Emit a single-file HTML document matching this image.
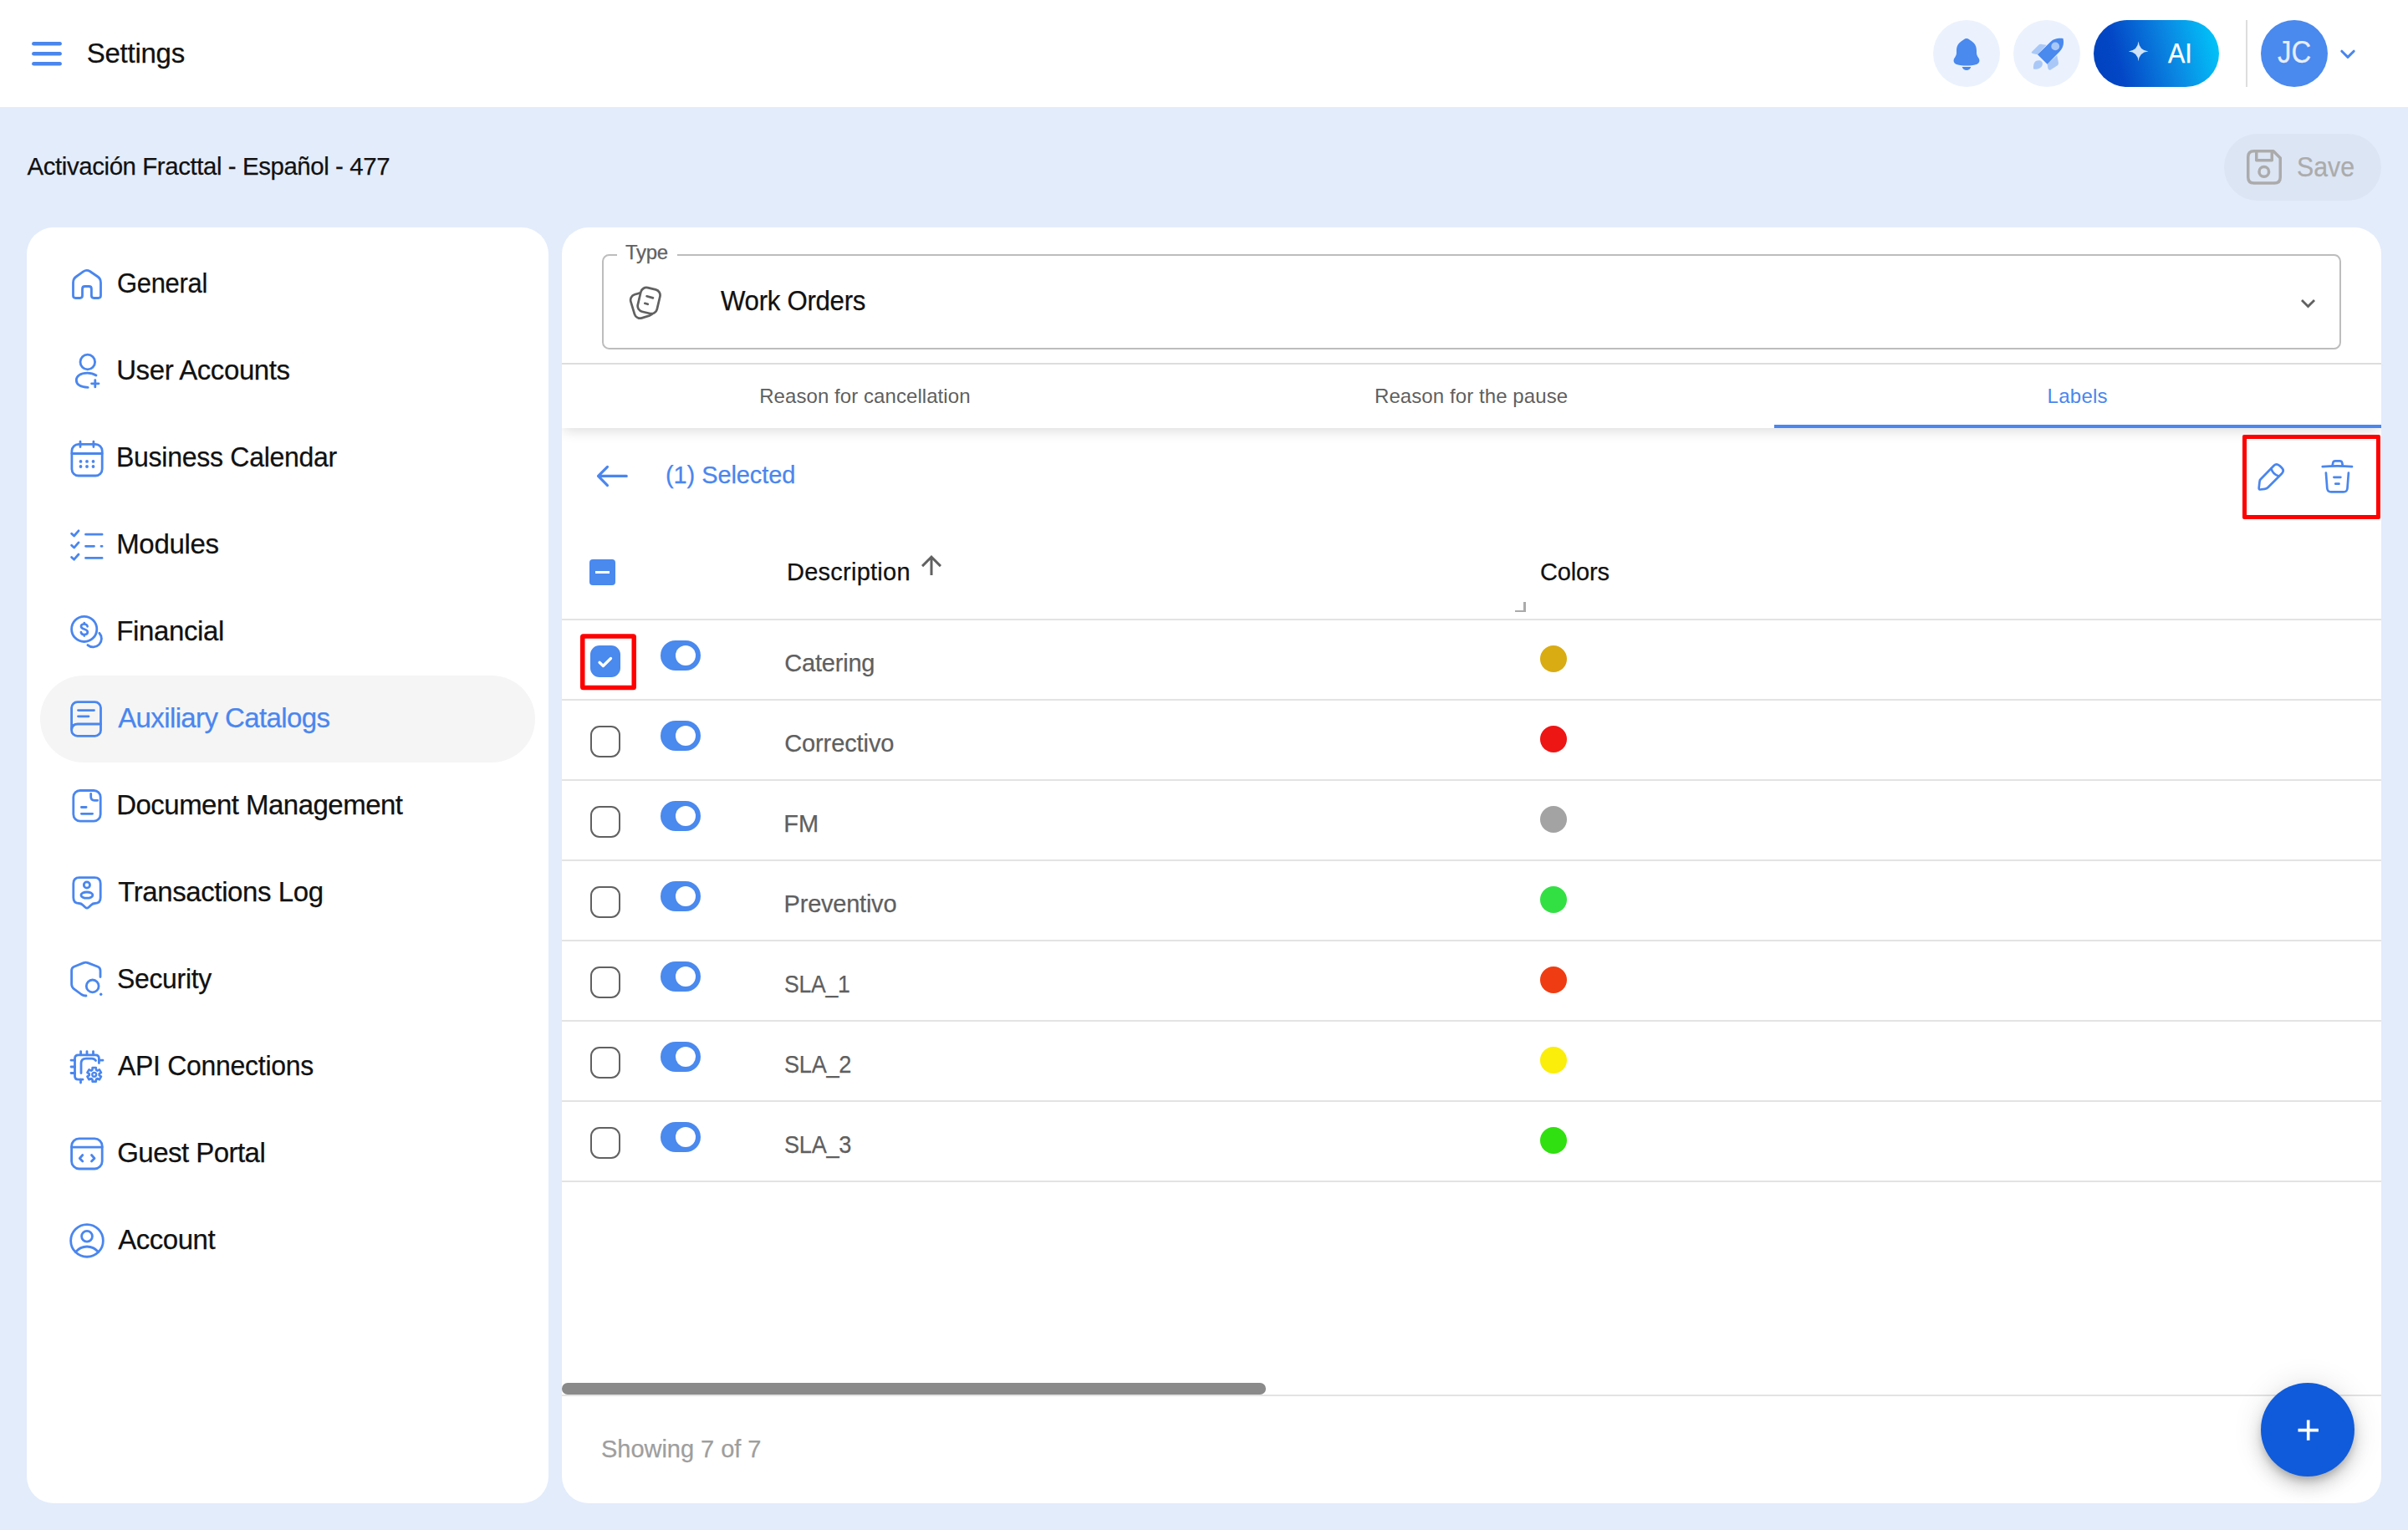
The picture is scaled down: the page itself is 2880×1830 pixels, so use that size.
<!DOCTYPE html>
<html><head><meta charset="utf-8">
<style>
*{box-sizing:border-box;margin:0;padding:0}
html,body{width:2880px;height:1830px;overflow:hidden}
body{background:#E3ECFB;font-family:"Liberation Sans",sans-serif;color:#111;position:relative}
.a{position:absolute}
.t{position:absolute;white-space:nowrap;line-height:1}
svg.a{overflow:visible}
.card{background:#fff;border-radius:32px}
.item{position:absolute;left:48px;width:592px;height:104px;border-radius:52px}
.item.act{background:#F5F5F5}
.item svg{position:absolute;left:32px;top:28px;width:48px;height:48px;overflow:visible}
.item span{position:absolute;left:92px;top:35px;font-size:32px;line-height:1;white-space:nowrap;color:#111}
.item.act span{color:#4A86EE}
.ln{position:absolute;left:672px;width:2176px;height:2px;background:#E3E3E3}
.cb{position:absolute;left:706px;width:36px;height:38px;border:2.5px solid #616161;border-radius:11px}
.cb.on{background:#4A89EE;border-color:#4A89EE}
.tg{position:absolute;left:790px;width:48px;height:36px;border-radius:18px;background:#4A89EE}
.tg:after{content:"";position:absolute;left:17.5px;top:5.8px;width:24.6px;height:24.6px;border-radius:50%;background:#fff}
.rt{position:absolute;left:938.5px;letter-spacing:0.4px;font-size:28px;line-height:1;color:#5F5F5F;white-space:nowrap}
.dot{position:absolute;left:1842px;width:32px;height:32px;border-radius:50%}
</style></head><body>
<!-- header -->
<div class="a" style="left:0;top:0;width:2880px;height:128px;background:#fff"></div>
<svg class="a" style="left:0;top:0" width="100" height="100"><g stroke="#4A86EE" stroke-width="4.4" stroke-linecap="round"><line x1="40.3" y1="52.2" x2="71.7" y2="52.2"/><line x1="40.3" y1="64.2" x2="71.7" y2="64.2"/><line x1="40.3" y1="76.3" x2="71.7" y2="76.3"/></g></svg>
<div class="a" style="left:2312px;top:24px;width:80px;height:80px;border-radius:50%;background:#EBF2FD"></div>
<div class="a" style="left:2408px;top:24px;width:80px;height:80px;border-radius:50%;background:#EBF2FD"></div>
<div class="a" style="left:2504px;top:24px;width:150px;height:80px;border-radius:40px;background:linear-gradient(75deg,#0040BC 0%,#0347C6 22%,#0A86E2 60%,#00CCFC 100%)"></div>
<div class="a" style="left:2686px;top:24px;width:2px;height:80px;background:#DDDDDD"></div>
<div class="a" style="left:2704px;top:24px;width:80px;height:80px;border-radius:50%;background:#4A89EE"></div>
<svg class="a" style="left:0;top:0" width="1" height="1"><path d="M2800.8 61.2 L2808 68.4 L2815.2 61.2" fill="none" stroke="#4A86EE" stroke-width="3" stroke-linecap="round" stroke-linejoin="round"/></svg>

<div class="a" style="left:2660px;top:160px;width:188px;height:80px;border-radius:40px;background:#DCE5F4"></div>
<!-- sidebar -->
<div class="a card" style="left:32px;top:272px;width:624px;height:1526px"></div>
<div class="item" style="top:288px"></div>
<div class="item" style="top:392px"></div>
<div class="item" style="top:496px"></div>
<div class="item" style="top:600px"></div>
<div class="item" style="top:704px"></div>
<div class="item act" style="top:808px"></div>
<div class="item" style="top:912px"></div>
<div class="item" style="top:1016px"></div>
<div class="item" style="top:1120px"></div>
<div class="item" style="top:1224px"></div>
<div class="item" style="top:1328px"></div>
<div class="item" style="top:1432px"></div>

<!-- main card -->
<div class="a card" style="left:672px;top:272px;width:2176px;height:1526px"></div>
<div class="a" style="left:720px;top:304px;width:2080px;height:114px;border:2px solid #BDBDBD;border-radius:8.5px"></div>
<div class="a" style="left:738px;top:300px;width:72px;height:10px;background:#fff"></div>
<div class="a" style="left:672px;top:434px;width:2176px;height:2px;background:#DDDDDD"></div>
<div class="a" style="left:672px;top:436px;width:2176px;height:120px;overflow:hidden"><div class="a" style="left:0;top:0;width:2176px;height:76px;background:#fff;box-shadow:0 6px 14px -2px rgba(0,0,0,0.13)"></div></div>
<div class="a" style="left:2122px;top:508px;width:726px;height:4px;background:#4A86EE"></div>
<div class="a" style="left:2682px;top:520px;width:165px;height:101px;border:5px solid #F00;border-radius:2px"></div>

<div class="a" style="left:705px;top:669px;width:31px;height:31px;border-radius:4px;background:#4A89EE"></div>
<div class="a" style="left:712px;top:682.7px;width:17px;height:3.7px;background:#fff"></div>
<div class="a" style="left:1822px;top:720px;width:2.5px;height:12px;background:#AAAAAA"></div>
<div class="a" style="left:1812px;top:729.5px;width:12.5px;height:2.5px;background:#AAAAAA"></div>
<div class="ln" style="top:740px"></div>
<div class="cb on" style="top:771.5px"></div>
<div class="tg" style="top:766px"></div>
<div class="dot" style="top:772px;background:#D9AC14"></div>
<div class="ln" style="top:836px"></div>
<div class="cb" style="top:867.5px"></div>
<div class="tg" style="top:862px"></div>
<div class="dot" style="top:868px;background:#EE1515"></div>
<div class="ln" style="top:932px"></div>
<div class="cb" style="top:963.5px"></div>
<div class="tg" style="top:958px"></div>
<div class="dot" style="top:964px;background:#A3A3A3"></div>
<div class="ln" style="top:1028px"></div>
<div class="cb" style="top:1059.5px"></div>
<div class="tg" style="top:1054px"></div>
<div class="dot" style="top:1060px;background:#33E044"></div>
<div class="ln" style="top:1124px"></div>
<div class="cb" style="top:1155.5px"></div>
<div class="tg" style="top:1150px"></div>
<div class="dot" style="top:1156px;background:#F03C12"></div>
<div class="ln" style="top:1220px"></div>
<div class="cb" style="top:1251.5px"></div>
<div class="tg" style="top:1246px"></div>
<div class="dot" style="top:1252px;background:#FAEE0A"></div>
<div class="ln" style="top:1316px"></div>
<div class="cb" style="top:1347.5px"></div>
<div class="tg" style="top:1342px"></div>
<div class="dot" style="top:1348px;background:#30E010"></div>
<div class="ln" style="top:1412px"></div>
<div class="a" style="left:672px;top:1654px;width:842px;height:14px;border-radius:7px;background:#8A8A8A"></div>
<div class="ln" style="top:1668px"></div>
<div class="a" style="left:2704px;top:1654px;width:112px;height:112px;border-radius:50%;background:#0F5BDB;box-shadow:0 6px 10px -2px rgba(0,0,0,.2),0 12px 20px 0 rgba(0,0,0,.14),0 2px 36px 0 rgba(0,0,0,.12)"></div>
<div id="settings" class="t" style="left:103.80px;top:46.96px;font-size:33.00px;color:#111;letter-spacing:-0.271px;-webkit-text-stroke:0.25px #111">Settings</div>
<div id="ai" class="t" style="left:2592.60px;top:46.86px;font-size:33.00px;color:#fff;-webkit-text-stroke:0.25px #fff;letter-spacing:0.00px;transform-origin:0 0;transform:scaleX(0.9256)">AI</div>
<div id="jc" class="t" style="left:2724.00px;top:44.72px;font-size:36.00px;color:#E6EEFB;-webkit-text-stroke:0.25px #E6EEFB;letter-spacing:0.00px;transform-origin:0 0;transform:scaleX(0.9120)">JC</div>
<div id="act" class="t" style="left:32.60px;top:184.01px;font-size:29.40px;color:#111;letter-spacing:-0.403px;-webkit-text-stroke:0.25px #111">Activación Fracttal - Español - 477</div>
<div id="save" class="t" style="left:2747.00px;top:182.96px;font-size:33.00px;color:#ABABAB;-webkit-text-stroke:0.25px #ABABAB;letter-spacing:0.00px;transform-origin:0 0;transform:scaleX(0.9178)">Save</div>
<div id="s0" class="t" style="left:140.20px;top:322.46px;font-size:33.00px;color:#111;-webkit-text-stroke:0.25px #111;letter-spacing:-0.30px;transform-origin:0 0;transform:scaleX(0.9372)">General</div>
<div id="s1" class="t" style="left:139.20px;top:426.46px;font-size:33.00px;color:#111;letter-spacing:-0.408px;-webkit-text-stroke:0.25px #111">User Accounts</div>
<div id="s2" class="t" style="left:139.20px;top:530.46px;font-size:33.00px;color:#111;-webkit-text-stroke:0.25px #111;letter-spacing:-0.30px;transform-origin:0 0;transform:scaleX(0.9709)">Business Calendar</div>
<div id="s3" class="t" style="left:139.20px;top:634.46px;font-size:33.00px;color:#111;letter-spacing:-0.317px;-webkit-text-stroke:0.25px #111">Modules</div>
<div id="s4" class="t" style="left:139.20px;top:738.46px;font-size:33.00px;color:#111;letter-spacing:-0.363px;-webkit-text-stroke:0.25px #111">Financial</div>
<div id="s5" class="t" style="left:141.20px;top:842.46px;font-size:33.00px;color:#4A86EE;letter-spacing:-0.612px;-webkit-text-stroke:0.25px #4A86EE">Auxiliary Catalogs</div>
<div id="s6" class="t" style="left:139.20px;top:946.46px;font-size:33.00px;color:#111;letter-spacing:-0.522px;-webkit-text-stroke:0.25px #111">Document Management</div>
<div id="s7" class="t" style="left:141.20px;top:1050.46px;font-size:33.00px;color:#111;letter-spacing:-0.400px;-webkit-text-stroke:0.25px #111">Transactions Log</div>
<div id="s8" class="t" style="left:140.20px;top:1154.46px;font-size:33.00px;color:#111;-webkit-text-stroke:0.25px #111;letter-spacing:-0.30px;transform-origin:0 0;transform:scaleX(0.9667)">Security</div>
<div id="s9" class="t" style="left:141.20px;top:1258.46px;font-size:33.00px;color:#111;-webkit-text-stroke:0.25px #111;letter-spacing:-0.30px;transform-origin:0 0;transform:scaleX(0.9694)">API Connections</div>
<div id="s10" class="t" style="left:140.20px;top:1362.46px;font-size:33.00px;color:#111;letter-spacing:-0.536px;-webkit-text-stroke:0.25px #111">Guest Portal</div>
<div id="s11" class="t" style="left:141.20px;top:1466.46px;font-size:33.00px;color:#111;letter-spacing:-0.467px;-webkit-text-stroke:0.25px #111">Account</div>
<div id="type" class="t" style="left:748.40px;top:289.69px;font-size:24.70px;color:#616161;-webkit-text-stroke:0.25px #616161;letter-spacing:-0.30px;transform-origin:0 0;transform:scaleX(0.9700)">Type</div>
<div id="wo" class="t" style="left:862.00px;top:342.76px;font-size:33.00px;color:#111;-webkit-text-stroke:0.25px #111;letter-spacing:-0.30px;transform-origin:0 0;transform:scaleX(0.9451)">Work Orders</div>
<div id="tab1" class="t" style="left:908.20px;top:461.68px;font-size:24.00px;color:#5F5F5F;letter-spacing:0.068px">Reason for cancellation</div>
<div id="tab2" class="t" style="left:1644.00px;top:461.68px;font-size:24.00px;color:#5F5F5F;letter-spacing:0.084px">Reason for the pause</div>
<div id="tab3" class="t" style="left:2448.60px;top:461.68px;font-size:24.00px;color:#4A86EE;letter-spacing:0.260px">Labels</div>
<div id="sel" class="t" style="left:796.00px;top:554.15px;font-size:29.00px;color:#4A86EE;letter-spacing:-0.091px;-webkit-text-stroke:0.25px #4A86EE">(1) Selected</div>
<div id="desc" class="t" style="left:941.00px;top:669.75px;font-size:29.00px;color:#111;letter-spacing:0.250px;-webkit-text-stroke:0.25px #111">Description</div>
<div id="colors" class="t" style="left:1842.00px;top:669.75px;font-size:29.00px;color:#111;letter-spacing:-0.160px;-webkit-text-stroke:0.25px #111">Colors</div>
<div id="r0" class="t" style="left:938.20px;top:778.55px;font-size:29.00px;color:#5F5F5F;letter-spacing:-0.186px;-webkit-text-stroke:0.25px #5F5F5F">Catering</div>
<div id="r1" class="t" style="left:938.20px;top:874.55px;font-size:29.00px;color:#5F5F5F;letter-spacing:-0.100px;-webkit-text-stroke:0.25px #5F5F5F">Correctivo</div>
<div id="r2" class="t" style="left:937.20px;top:970.55px;font-size:29.00px;color:#5F5F5F;letter-spacing:0.200px;-webkit-text-stroke:0.25px #5F5F5F">FM</div>
<div id="r3" class="t" style="left:937.60px;top:1066.55px;font-size:29.00px;color:#5F5F5F;letter-spacing:-0.233px;-webkit-text-stroke:0.25px #5F5F5F">Preventivo</div>
<div id="r4" class="t" style="left:937.60px;top:1162.55px;font-size:29.00px;color:#5F5F5F;-webkit-text-stroke:0.25px #5F5F5F;letter-spacing:-0.30px;transform-origin:0 0;transform:scaleX(0.9179)">SLA_1</div>
<div id="r5" class="t" style="left:937.60px;top:1258.55px;font-size:29.00px;color:#5F5F5F;-webkit-text-stroke:0.25px #5F5F5F;letter-spacing:-0.30px;transform-origin:0 0;transform:scaleX(0.9369)">SLA_2</div>
<div id="r6" class="t" style="left:937.60px;top:1354.55px;font-size:29.00px;color:#5F5F5F;-webkit-text-stroke:0.25px #5F5F5F;letter-spacing:-0.30px;transform-origin:0 0;transform:scaleX(0.9369)">SLA_3</div>
<div id="show" class="t" style="left:719.00px;top:1718.65px;font-size:29.00px;color:#9E9E9E;letter-spacing:-0.031px;-webkit-text-stroke:0.25px #9E9E9E">Showing 7 of 7</div>
<svg class="a" style="left:0;top:0" width="2880" height="1830" viewBox="0 0 2880 1830">
<g fill="none" stroke="#4A86EE" stroke-width="2.8" stroke-linecap="round" stroke-linejoin="round">
<!-- General home -->
<path d="M 98.5 353.5 V 345.5 Q 98.5 342.5 101.5 342.5 H 106.4 Q 109.4 342.5 109.4 345.5 V 353.5 Q 109.4 356.5 112.4 356.5 H 117.5 Q 120.5 356.5 120.5 353.5 V 338 Q 120.5 333.5 117 331 L 107.5 324.5 Q 103.5 322 99.5 324.8 L 91 331 Q 87.5 333.5 87.5 338 V 353.5 Q 87.5 356.5 90.5 356.5 H 95.5 Q 98.5 356.5 98.5 353.5 Z"/>
<!-- User -->
<circle cx="104.8" cy="433" r="8.8"/>
<path d="M 115 449 Q 110.5 446.1 104.5 446.1 C 96 446.1 91.3 450 91.3 454.6 C 91.3 459.5 96 463 105.2 463.4"/>
<path d="M 109.6 458.8 H 118 M 113.8 454.6 V 462.9"/>
<!-- Calendar -->
<rect x="85.9" y="531.3" width="36.3" height="37.7" rx="8"/>
<path d="M 85.9 542.5 H 122.2 M 96 528.2 V 534.5 M 111.9 528.2 V 534.5"/>
<circle cx="96.5" cy="551.9" r="1.9" fill="#4A86EE" stroke="none"/><circle cx="104.0" cy="551.9" r="1.9" fill="#4A86EE" stroke="none"/><circle cx="111.5" cy="551.9" r="1.9" fill="#4A86EE" stroke="none"/><circle cx="96.5" cy="558.0" r="1.9" fill="#4A86EE" stroke="none"/><circle cx="104.0" cy="558.0" r="1.9" fill="#4A86EE" stroke="none"/><circle cx="111.5" cy="558.0" r="1.9" fill="#4A86EE" stroke="none"/>
<!-- Modules -->
<path d="M 85.6 638.2 L 88.6 641 L 94 634.8 M 85.6 652.3 L 88.6 655.1 L 94 648.9 M 85.6 666.4 L 88.6 669.2 L 94 663 M 102.5 639.2 H 122.1 M 102.5 653.3 H 112.5 M 121 653.3 H 122.1 M 102.5 667.4 H 122.1"/>
<!-- Financial -->
<circle cx="100.7" cy="752.4" r="15.1"/>
<path d="M 118.83 757.24 A 10.00 10.00 0 0 1 104.97 771.59"/>
<!-- Aux -->
<rect x="85.6" y="839.6" width="34.9" height="40.8" rx="7"/>
<path d="M 93.5 849.6 H 112.5 M 93.5 856.8 H 106 M 85.8 872 Q 86.5 866 93 866 H 120.5"/>
<!-- Document -->
<rect x="87.8" y="945.5" width="32.4" height="36.6" rx="8"/>
<path d="M 108.7 949.4 V 953 Q 108.7 957.3 113 957.3 H 116.6 M 97.4 965.5 H 103.1 M 97.4 973.3 H 110.6"/>
<!-- Transactions -->
<path d="M 95 1049.6 H 113 Q 120.2 1049.6 120.2 1056.8 V 1073.5 Q 120.2 1080.5 113.5 1080.5 Q 111 1080.5 109 1082.4 L 106 1085.3 Q 104 1087 102 1085.3 L 99 1082.4 Q 97 1080.5 94.5 1080.5 Q 87.8 1080.5 87.8 1073.5 V 1056.8 Q 87.8 1049.6 95 1049.6 Z"/>
<circle cx="103.9" cy="1058.5" r="3.6"/>
<ellipse cx="103.9" cy="1070.6" rx="7" ry="3.6"/>
<!-- Security -->
<path d="M 120 1168.5 V 1161 Q 120 1157.5 117 1156.3 L 105 1151.6 Q 102.5 1150.8 100 1151.6 L 88.5 1156.3 Q 85.6 1157.5 85.6 1161 V 1177 Q 85.6 1180.5 88.5 1182.8 L 97.5 1189.5 Q 100 1191.2 103 1191"/>
<circle cx="110.7" cy="1179.4" r="7.4"/>
<circle cx="120.7" cy="1189.2" r="1.7" fill="#4A86EE" stroke="none"/>
<!-- API -->
<path d="M 99 1291.2 H 93.5 Q 89.5 1291.2 89.5 1287 V 1266 Q 89.5 1261.8 93.7 1261.8 H 114.2 Q 118.4 1261.8 118.4 1266 V 1271.5"/>
<path d="M 96.6 1257.6 V 1261.8 M 104 1257.6 V 1261.8 M 111.5 1257.6 V 1261.8 M 85 1268.2 H 89.5 M 85 1276 H 89.5 M 85 1283.5 H 89.5 M 96.5 1291.2 V 1295 M 118.4 1268.2 H 123"/>
<path d="M 97 1283.5 V 1272 Q 97 1266.2 103 1266.2 H 110 Q 113 1266.2 114.5 1268.5"/>
<path d="M 110.62 1276.96 L 114.78 1276.96 L 114.95 1279.74 L 116.39 1280.57 L 118.89 1279.33 L 120.97 1282.93 L 118.64 1284.46 L 118.64 1286.14 L 120.97 1287.67 L 118.89 1291.27 L 116.39 1290.03 L 114.95 1290.86 L 114.78 1293.64 L 110.62 1293.64 L 110.45 1290.86 L 109.01 1290.03 L 106.51 1291.27 L 104.43 1287.67 L 106.76 1286.14 L 106.76 1284.46 L 104.43 1282.93 L 106.51 1279.33 L 109.01 1280.57 L 110.45 1279.74 Z" stroke-width="2.6"/>
<circle cx="112.7" cy="1285.3" r="2.4" stroke-width="2.4"/>
<!-- Guest portal -->
<rect x="85.6" y="1361.8" width="36.6" height="36.2" rx="9"/>
<path d="M 85.6 1372.1 H 122.2 M 98.8 1381.5 L 95.3 1385.5 L 98.8 1389 M 109.5 1381.5 L 113 1385.5 L 109.5 1389"/>
<!-- Account -->
<circle cx="104" cy="1483.9" r="19.35"/>
<circle cx="104" cy="1478.8" r="6.4"/>
<path d="M 90.3 1497.5 Q 96 1491 104 1491 Q 112 1491 117.7 1497.5"/>
</g>
<path d="M 104.6 749.3 C 104.3 747.5 102.8 746.5 100.8 746.5 C 98.5 746.5 97 747.6 97 749.3 C 97 751.2 98.8 751.9 100.8 752.5 C 103 753.2 104.8 754 104.8 756 C 104.8 757.8 103.2 759 100.8 759 C 98.6 759 97.2 758 96.9 756.2 M 100.8 745 V 746.5 M 100.8 759 V 760.6" fill="none" stroke="#4A86EE" stroke-width="2.7" stroke-linecap="round"/>
<!-- bell -->
<g fill="#4A89EE">
<path d="M 2352 45.9 C 2354.5 45.9 2355.5 47.5 2357 48.5 C 2362 51.5 2364 55 2364 61 V 63.5 C 2364 65 2364.5 66.5 2365.5 68 L 2366.5 69.5 C 2368.5 72.5 2367 76 2364 77 C 2360 78.3 2356 78.6 2352 78.6 C 2348 78.6 2344 78.3 2340 77 C 2337 76 2335.5 72.5 2337.5 69.5 L 2338.5 68 C 2339.5 66.5 2340 65 2340 63.5 V 61 C 2340 55 2342 51.5 2347 48.5 C 2348.5 47.5 2349.5 45.9 2352 45.9 Z"/>
<path d="M 2346.7 80 H 2357.3 C 2356.5 82.5 2354.5 84 2352 84 C 2349.5 84 2347.5 82.5 2346.7 80 Z"/>
<!-- rocket -->
<path d="M 2430 62 L 2438 54 C 2439 53 2440.5 52.6 2442 52.9 L 2447.6 53.8 L 2437 65.2 L 2432 64.3 C 2429.8 63.8 2429 63 2430 62 Z" fill="#AAC8F7"/>
<path d="M 2460.2 66.2 L 2461.9 74.5 C 2462.2 76 2461.8 77.2 2460.8 78.2 L 2453 83.2 C 2451.5 84.3 2449.8 83.6 2449.4 81.8 L 2448.6 76.8 Z" fill="#AAC8F7"/>
<path d="M 2432.3 82.6 C 2431.5 82 2432 78 2432.8 75.5 C 2433.8 72.5 2437.5 71.5 2440.5 72.5 C 2443.5 74 2443.5 77.5 2441.5 80 C 2439.5 82.5 2433.5 83.3 2432.3 82.6 Z" fill="#AAC8F7"/>
<path d="M 2437 65.2 L 2452 50.5 C 2457 45.5 2463 45.5 2467.5 46 C 2468.5 50.5 2468.5 56.5 2463.5 61.5 L 2448.6 76.8 Z"/>
<circle cx="2458.2" cy="55.4" r="4.9" fill="#AAC8F7"/>
</g>
<!-- star -->
<path d="M 2557.6 49.6 Q 2558.6 60.4 2569.4 61.4 Q 2558.6 62.4 2557.6 73.2 Q 2556.6 62.4 2545.8 61.4 Q 2556.6 60.4 2557.6 49.6 Z" fill="#D0E2F8"/>
<!-- save icon -->
<g fill="none" stroke="#ABABAB" stroke-width="3.5" stroke-linejoin="round">
<path d="M 2695.75 180.75 H 2719 L 2727.25 189 V 212 Q 2727.25 219 2720.25 219 H 2695.75 Q 2688.75 219 2688.75 212 V 187.75 Q 2688.75 180.75 2695.75 180.75 Z"/>
<path d="M 2698.75 180.75 V 191.85 H 2717.25 V 180.75"/>
<circle cx="2707.8" cy="205.4" r="5.8"/>
</g>
<!-- work orders icon -->
<g fill="#fff" stroke="#616161" stroke-width="2.35" stroke-linecap="round" transform="translate(771.5 362.1) scale(1.15) translate(-772.8 -362.3)">
<rect x="759.5" y="352" width="20.5" height="25.5" rx="6" transform="rotate(-17 769.75 364.75)"/>
<rect x="766.55" y="347.35" width="20.5" height="25.5" rx="6" transform="rotate(13.3 776.8 360.1)"/>
<path d="M 774.6 355.5 L 781 357.3 M 772.6 362.9 L 775.6 363.8" fill="none"/>
</g>
<path d="M16.59 8.59L12 13.17 7.41 8.59 6 10l6 6 6-6z" fill="#616161" transform="translate(2743.5 345.8) scale(1.417)"/>
<!-- arrows -->
<path d="M 715.5 569.4 H 749.3 M 726.5 558.3 L 715.5 569.4 L 726.5 580.6" fill="none" stroke="#4A86EE" stroke-width="3.1" stroke-linecap="round" stroke-linejoin="round"/>
<path d="M4 12l1.41 1.41L11 7.83V20h2V7.83l5.58 5.59L20 12l-8-8-8 8z" fill="#616161" transform="translate(1096 658.1) scale(1.5)"/>
<!-- pencil / trash -->
<g fill="none" stroke="#4A86EE" stroke-width="2.7" stroke-linecap="round" stroke-linejoin="round">
<path d="M 2703 574 L 2719.5 557 Q 2723 553.5 2727 557.5 L 2729 559.5 Q 2732.5 563 2729 566.5 L 2712.5 583 Q 2711 584.5 2708.5 584.8 L 2703.5 585.5 Q 2701.5 585.7 2701.7 583.5 L 2702.3 578 Q 2702.5 575.5 2703 574 Z"/>
<path d="M 2716.5 560.5 Q 2718 567 2725.5 569.5"/>
<path d="M 2777.8 558.2 Q 2795.5 556.5 2813 558.2 M 2789.5 557.5 L 2790.3 553.5 Q 2790.8 551.3 2793 551.3 H 2798.5 Q 2800.7 551.3 2801.2 553.5 L 2802 557.5 M 2781.9 565.5 L 2783.3 584 Q 2783.7 588.4 2788 588.4 H 2802.8 Q 2807.1 588.4 2807.5 584 L 2808.9 565.5 M 2791.4 570.8 H 2799.4 M 2793.3 578.7 H 2797.5"/>
</g>
<!-- checkmark -->
<path d="M 717 792.3 L 721.4 796.5 L 730.5 787.5" fill="none" stroke="#fff" stroke-width="3.3" stroke-linecap="round" stroke-linejoin="round"/>
<!-- red box around checkbox -->
<rect x="696.75" y="761" width="61.5" height="61.5" rx="0.8" fill="none" stroke="#F00" stroke-width="5.5"/>
<!-- FAB plus -->
<path d="M 2748.5 1710.6 H 2772.9 M 2760.7 1698.5 V 1722.8" stroke="#fff" stroke-width="3.6"/>
</svg>
</body></html>
